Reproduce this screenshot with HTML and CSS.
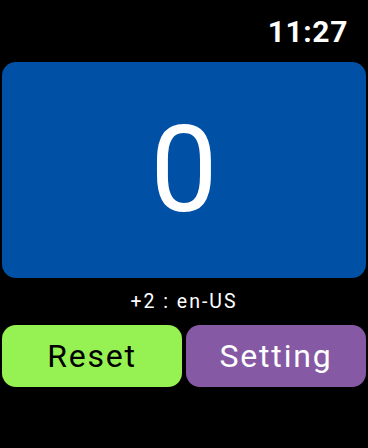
FILE: index.html
```html
<!doctype html>
<html lang="en">
<head>
<meta charset="UTF-8">
<title>Counter</title>
<link rel="stylesheet" href="styles.css">
</head>
<body>
<div class="screen">
	<div class="status"><span class="time">11:27</span></div>
	<div class="counter"><span class="count">0</span></div>
	<div class="info">+2 : en-US</div>
	<div class="buttons">
		<button class="btn reset">Reset</button>
		<button class="btn setting">Setting</button>
	</div>
</div>
</body>
</html>
```
FILE: styles.css
```css
html,body {margin: 0;padding: 0;background: #000;}
body {font-family: Roboto, "Liberation Sans", sans-serif;color: #fff;}

.screen {width: 368px;height: 448px;padding: 0 2px;box-sizing: border-box;display: flex;flex-direction: column;}

/* 顶部时间 */
.status {height: 62px;display: flex;justify-content: flex-end;align-items: flex-start;}
.time {margin: 14px 18px 0 0;font-size: 30px;font-weight: 700;letter-spacing: 0.6px;line-height: 36px;}

/* 计数区域 */
.counter {height: 216px;background-color: #0050a5;border-radius: 14px;display: flex;align-items: center;justify-content: center;}
.count {font-size: 120px;font-weight: 400;line-height: 1;}

.info {height: 47px;display: flex;align-items: center;justify-content: center;font-size: 19.5px;letter-spacing: 2px;}

/* 按钮 */
.buttons {display: flex;gap: 4px;height: 62px;}
.btn {flex: 1;border: 0 none;border-radius: 14px;font-family: inherit;font-size: 32px;letter-spacing: 1.8px;padding: 0;cursor: pointer;}
.reset {background-color: #96f152;color: #000;}
.setting {background-color: #8659a4;color: #fff;}
```
